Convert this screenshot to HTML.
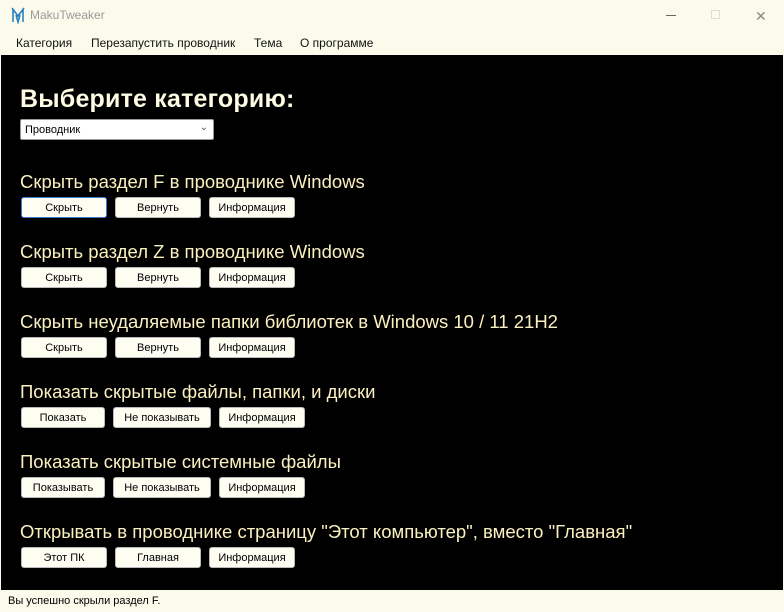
<!DOCTYPE html>
<html><head><meta charset="utf-8"><style>
*{margin:0;padding:0;box-sizing:border-box}
body{width:784px;height:612px;overflow:hidden;background:#fbfbec;font-family:"Liberation Sans",sans-serif;position:relative}
.abs{position:absolute}
.title{left:30px;top:8px;font-size:12px;color:#9a9a9a}
.menu{top:36px;font-size:12px;color:#111}
.main{left:1px;top:55px;width:782px;height:535px;background:#000}
h1{position:absolute;left:20px;top:85px;font-size:25px;color:#fdfbe4;font-weight:bold;letter-spacing:0.2px}
.sel{left:20px;top:119px;width:194px;height:21px;background:#fff;border:1px solid #999;border-radius:2px;font-size:11px;padding:4px 4px;color:#000}
.h{position:absolute;left:20px;font-size:18.5px;color:#fbf0c0;white-space:nowrap}
.b{position:absolute;height:21px;background:#fdfdf2;border:1px solid #bbb;border-radius:3px;font-size:11px;color:#000;text-align:center;line-height:21px}
.status{left:8px;top:595px;font-size:11px;color:#000}
</style></head><body>
<svg class="abs" style="left:10px;top:6px" width="16" height="18" viewBox="0 0 16 18"><path d="M2 2 L8 10 L14 2 M3 3 V16 M13 3 V16 M6 9 L8 16 L10 9" stroke="#2a7fc0" stroke-width="1.6" fill="none"/></svg>
<div class="abs title">MakuTweaker</div>
<div class="abs" style="left:666px;top:15px;width:10px;height:1px;background:#666"></div>
<div class="abs" style="left:711px;top:10px;width:9px;height:9px;border:1px solid #ddd"></div>
<div class="abs" style="left:755px;top:8px;font-size:14px;color:#888">✕</div>
<div class="abs menu" style="left:16px">Категория</div>
<div class="abs menu" style="left:91px">Перезапустить проводник</div>
<div class="abs menu" style="left:254px">Тема</div>
<div class="abs menu" style="left:300px">О программе</div>
<div class="abs main"></div>
<h1>Выберите категорию:</h1>
<div class="abs sel">Проводник<span style="position:absolute;right:5px;top:2px;font-size:10px;color:#555">⌄</span></div>

<div class="h" style="top:171px">Скрыть раздел F в проводнике Windows</div>
<div class="b" style="left:21px;top:197px;width:86px;border-color:#3a7bd0">Скрыть</div>
<div class="b" style="left:115px;top:197px;width:86px">Вернуть</div>
<div class="b" style="left:209px;top:197px;width:86px">Информация</div>

<div class="h" style="top:241px">Скрыть раздел Z в проводнике Windows</div>
<div class="b" style="left:21px;top:267px;width:86px">Скрыть</div>
<div class="b" style="left:115px;top:267px;width:86px">Вернуть</div>
<div class="b" style="left:209px;top:267px;width:86px">Информация</div>

<div class="h" style="top:311px">Скрыть неудаляемые папки библиотек в Windows 10 / 11 21H2</div>
<div class="b" style="left:21px;top:337px;width:86px">Скрыть</div>
<div class="b" style="left:115px;top:337px;width:86px">Вернуть</div>
<div class="b" style="left:209px;top:337px;width:86px">Информация</div>

<div class="h" style="top:381px">Показать скрытые файлы, папки, и диски</div>
<div class="b" style="left:21px;top:407px;width:84px">Показать</div>
<div class="b" style="left:113px;top:407px;width:98px">Не показывать</div>
<div class="b" style="left:219px;top:407px;width:86px">Информация</div>

<div class="h" style="top:451px">Показать скрытые системные файлы</div>
<div class="b" style="left:21px;top:477px;width:84px">Показывать</div>
<div class="b" style="left:113px;top:477px;width:98px">Не показывать</div>
<div class="b" style="left:219px;top:477px;width:86px">Информация</div>

<div class="h" style="top:521px">Открывать в проводнике страницу "Этот компьютер", вместо "Главная"</div>
<div class="b" style="left:21px;top:547px;width:86px">Этот ПК</div>
<div class="b" style="left:115px;top:547px;width:86px">Главная</div>
<div class="b" style="left:209px;top:547px;width:86px">Информация</div>

<div class="abs status">Вы успешно скрыли раздел F.</div>
</body></html>
